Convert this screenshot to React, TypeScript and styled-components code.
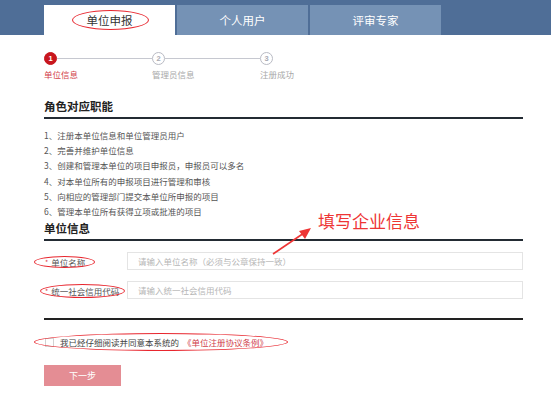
import styled, { createGlobalStyle } from 'styled-components';

const GlobalStyle = createGlobalStyle`
	* {
		box-sizing: border-box;
	}

	body {
		margin: 0;
		background: #ffffff;
		font-family: 'Noto Sans CJK SC', 'Noto Sans', sans-serif;
		color: #444;
	}
`;

const tabs = ['单位申报', '个人用户', '评审专家'];
const steps = ['单位信息', '管理员信息', '注册成功'];
const duties = [
	'注册本单位信息和单位管理员用户',
	'完善并维护单位信息',
	'创建和管理本单位的项目申报员，申报员可以多名',
	'对本单位所有的申报项目进行管理和审核',
	'向相应的管理部门提交本单位所申报的项目',
	'管理本单位所有获得立项或批准的项目',
];

export default function App() {
	return (
		<Page>
			<GlobalStyle />
			<TopBar>
				{tabs.map((t, i) => (
					<Tab key={t} $active={i === 0}>
						{i === 0 ? (
							<Circled $t={2} $r={16} $b={2} $l={15}>
								{t}
							</Circled>
						) : (
							t
						)}
					</Tab>
				))}
			</TopBar>

			<Content>
				<Steps>
					{steps.map((s, i) => (
						<Step key={s}>
							<StepHead>
								<StepDot $active={i === 0}>{i + 1}</StepDot>
								{i < steps.length - 1 && <StepLine />}
							</StepHead>
							<StepLabel $active={i === 0}>{s}</StepLabel>
						</Step>
					))}
				</Steps>

				<SectionTitle>角色对应职能</SectionTitle>
				<DutyList>
					{duties.map((d, i) => (
						<li key={d}>
							{i + 1}、{d}
						</li>
					))}
				</DutyList>

				<SectionTitle $gap={1}>单位信息</SectionTitle>
				<Form>
					<FormRow>
						<Label>
							<Circled $t={0} $r={10} $b={0} $l={11}>
								<Star>*</Star>单位名称
							</Circled>
						</Label>
						<Input placeholder="请输入单位名称（必须与公章保持一致）" />
					</FormRow>
					<FormRow>
						<Label>
							<Circled $t={1} $r={6} $b={1} $l={5}>
								<Star>*</Star>统一社会信用代码
							</Circled>
						</Label>
						<Input placeholder="请输入统一社会信用代码" />
					</FormRow>
				</Form>
				<Divider />

				<Agree>
					<Circled $t={3} $r={20} $b={3} $l={11}>
						<Check type="checkbox" />
						我已经仔细阅读并同意本系统的
						<Link>《单位注册协议条例》</Link>
					</Circled>
				</Agree>

				<NextButton>下一步</NextButton>
			</Content>

			<Callout>填写企业信息</Callout>
			<Arrow width="44" height="34" viewBox="0 0 44 34">
				<line x1="3" y1="30" x2="34" y2="9" stroke="#ee3535" strokeWidth="1.6" />
				<polygon points="41,4 29,7 35,15" fill="#ee3535" />
			</Arrow>
		</Page>
	);
}

const Page = styled.div`
	position: relative;
	width: 551px;
	min-height: 395px;
`;

const TopBar = styled.div`
	height: 35px;
	padding: 5px 0 0 44px;

	display: flex;
	align-items: stretch;
	gap: 2px;

	background-color: #4f6e97;
`;

const Tab = styled.div<{ $active?: boolean }>`
	width: 131px;

	display: flex;
	justify-content: center;
	align-items: center;

	font-size: 11.5px;
	color: ${(p) => (p.$active ? '#333' : '#ffffff')};
	background-color: ${(p) => (p.$active ? '#ffffff' : '#7592b5')};
`;

const Circled = styled.span<{ $t: number; $r: number; $b: number; $l: number }>`
	position: relative;
	display: inline-flex;
	align-items: center;

	&::after {
		content: '';
		position: absolute;
		top: ${(p) => -p.$t}px;
		right: ${(p) => -p.$r}px;
		bottom: ${(p) => -p.$b}px;
		left: ${(p) => -p.$l}px;
		border: 1.5px solid #e8262e;
		border-radius: 50%;
		pointer-events: none;
	}
`;

const Content = styled.div`
	width: 523px;
	padding-left: 44px;
`;

const Steps = styled.div`
	margin-top: 17px;
	display: flex;
`;

const Step = styled.div`
	width: 108px;
	display: flex;
	flex-direction: column;
`;

const StepHead = styled.div`
	display: flex;
	align-items: center;
`;

const StepDot = styled.div<{ $active?: boolean }>`
	width: 13px;
	height: 13px;
	border-radius: 50%;

	display: flex;
	justify-content: center;
	align-items: center;

	font-family: 'Liberation Sans', Arial, sans-serif;
	font-size: 7.5px;
	font-weight: 700;
	color: ${(p) => (p.$active ? '#ffffff' : '#a9abb3')};
	background-color: ${(p) => (p.$active ? '#c8161e' : '#ffffff')};
	border: 1px solid ${(p) => (p.$active ? '#c8161e' : '#b9bbc4')};
`;

const StepLine = styled.div`
	flex: 1;
	height: 1px;
	background-color: #c6c8d0;
`;

const StepLabel = styled.div<{ $active?: boolean }>`
	margin-top: 3px;
	font-size: 8.5px;
	line-height: 12px;
	color: ${(p) => (p.$active ? '#d2424b' : '#a8a8a8')};
`;

const SectionTitle = styled.div<{ $gap?: number }>`
	margin-top: ${(p) => (p.$gap !== undefined ? p.$gap : 18)}px;
	padding-bottom: 3px;

	font-size: 11.5px;
	font-weight: 700;
	line-height: 16px;
	color: #222;

	border-bottom: 2px solid #232b33;
`;

const DutyList = styled.ul`
	margin: 9px 0 0;
	padding: 0;
	list-style: none;

	li {
		font-size: 8.5px;
		line-height: 15.2px;
		color: #555;
	}
`;

const Form = styled.div`
	margin-top: 11px;
	display: flex;
	flex-direction: column;
	gap: 11px;
`;

const FormRow = styled.div`
	height: 18px;
	display: flex;
	align-items: center;
`;

const Label = styled.div`
	width: 83px;
	padding-left: 1px;
	font-size: 8.5px;
	color: #555;
`;

const Star = styled.span`
	margin-right: 3px;
	font-size: 7px;
	color: #e0404a;
`;

const Input = styled.input`
	flex: 1;
	height: 18px;
	padding: 0 10px;

	font-family: inherit;
	font-size: 8.5px;
	color: #444;

	border: 1px solid #e4e4e4;
	outline: none;

	&::placeholder {
		color: #b6b6b6;
	}
`;

const Divider = styled.div`
	margin-top: 19px;
	height: 2px;
	background-color: #222;
`;

const Agree = styled.div`
	margin-top: 15px;
	height: 14px;
	padding-left: 1px;

	display: flex;
	align-items: center;

	font-size: 8.5px;
	color: #444;
`;

const Check = styled.input`
	appearance: none;
	width: 9px;
	height: 9px;
	margin: 0 6px 0 0;
	border: 1px solid #d2d2d2;
	background: #fff;
`;

const Link = styled.span`
	margin-left: 4px;
	color: #d0404c;
`;

const NextButton = styled.button`
	margin-top: 16px;
	width: 77px;
	height: 21px;
	padding: 0;

	font-family: inherit;
	font-size: 9px;
	color: #ffffff;

	background-color: #e48d94;
	border: none;
`;

const Callout = styled.div`
	position: absolute;
	left: 318px;
	top: 211px;

	font-size: 17px;
	line-height: 19px;
	color: #ee3535;
`;

const Arrow = styled.svg`
	position: absolute;
	left: 270px;
	top: 224px;
`;
